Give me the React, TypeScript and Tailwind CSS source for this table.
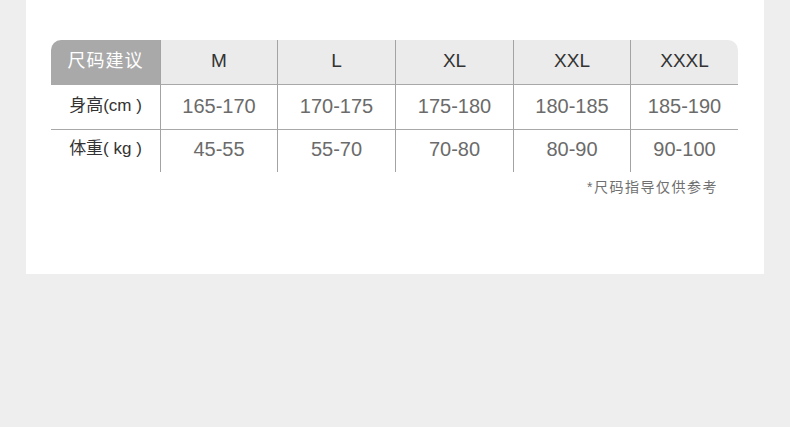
const font = { fontFamily: '"Liberation Sans", "Noto Sans CJK SC", sans-serif' };

const sizes = ["M", "L", "XL", "XXL", "XXXL"];
const rows = [
  { label: "身高(cm )", values: ["165-170", "170-175", "175-180", "180-185", "185-190"] },
  { label: "体重( kg )", values: ["45-55", "55-70", "70-80", "80-90", "90-100"] },
];

export default function App() {
  return (
    <main className="h-[427px] w-[790px] bg-[#eeeeee] px-[26px]" style={font}>
      <div className="h-[274px] bg-white pl-[25px] pr-[26px] pt-[40px]">
        <div className="grid w-[687px] grid-cols-[109px_117px_118px_118px_117px_108px]">
          <div className="flex h-[45px] items-center justify-center rounded-tl-[10px] bg-[#a9a9a9] pb-[2px] text-[18px] tracking-[1px] text-white">
            尺码建议
          </div>
          {sizes.map((s, i) => (
            <div
              key={s}
              className={
                "flex h-[45px] items-center justify-center border-b border-l border-b-[#a8a8a8] border-l-[#a3a3a3] bg-[#ebebeb] pb-[2px] text-[19px] text-[#333333]" +
                (i === sizes.length - 1 ? " rounded-tr-[10px]" : "")
              }
            >
              {s}
            </div>
          ))}

          {rows.map((r, ri) => (
            <div key={r.label} className="contents">
              <div
                className={
                  "flex items-center justify-center text-[17px] text-[#333333]" +
                  (ri === 0 ? " h-[45px] border-b border-[#a8a8a8] pb-[2px]" : " h-[42px] pb-[4px]")
                }
              >
                {r.label}
              </div>
              {r.values.map((v) => (
                <div
                  key={v}
                  className={
                    "flex items-center justify-center border-l border-l-[#a3a3a3] text-[20px] text-[#6b6b6b]" +
                    (ri === 0 ? " h-[45px] border-b border-b-[#a8a8a8] pb-[2px]" : " h-[42px] pb-[4px]")
                  }
                >
                  {v}
                </div>
              ))}
            </div>
          ))}
        </div>
        <p className="mt-[5px] w-[667px] text-right text-[14px] leading-[20px] tracking-[1.5px] text-[#6f6f6f]">
          *尺码指导仅供参考
        </p>
      </div>
    </main>
  );
}
